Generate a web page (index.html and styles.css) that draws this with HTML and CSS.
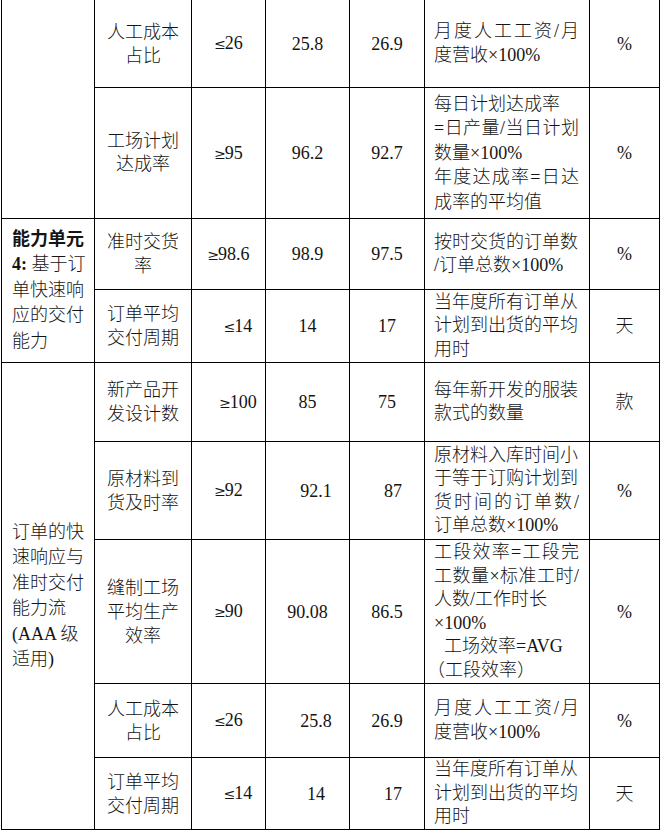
FILE: index.html
```html
<!DOCTYPE html>
<html lang="zh-CN">
<head>
<meta charset="utf-8">
<title>指标表</title>
<link rel="stylesheet" href="styles.css">
</head>
<body>
<table class="kpi">
  <colgroup>
    <col class="w1"><col class="w2"><col class="w3"><col class="w4"><col class="w5"><col class="w6"><col class="w7">
  </colgroup>
  <tr class="h1">
    <td class="cat" rowspan="2"></td>
    <td class="name">人工成本<br>占比</td>
    <td class="num"><span class="cmp">≤</span>26</td>
    <td class="num">25.8</td>
    <td class="num">26.9</td>
    <td class="desc"><span class="ln j">月度人工工资/月</span><span class="ln">度营收×100%</span></td>
    <td class="unit">%</td>
  </tr>
  <tr class="h2">
    <td class="name tight">工场计划<br>达成率</td>
    <td class="num"><span class="cmp">≥</span>95</td>
    <td class="num">96.2</td>
    <td class="num">92.7</td>
    <td class="desc loose"><span class="ln">每日计划达成率</span><span class="ln j">=日产量/当日计划</span><span class="ln">数量×100%</span><span class="ln j">年度达成率=日达</span><span class="ln">成率的平均值</span></td>
    <td class="unit">%</td>
  </tr>
  <tr class="h3">
    <td class="cat" rowspan="2"><b>能力单元<br>4:</b> 基于订<br>单快速响<br>应的交付<br>能力</td>
    <td class="name">准时交货<br>率</td>
    <td class="num"><span class="cmp">≥</span>98.6</td>
    <td class="num">98.9</td>
    <td class="num">97.5</td>
    <td class="desc"><span class="ln">按时交货的订单数</span><span class="ln">/订单总数×100%</span></td>
    <td class="unit">%</td>
  </tr>
  <tr class="h4">
    <td class="name">订单平均<br>交付周期</td>
    <td class="num shift3"><span class="cmp">≤</span>14</td>
    <td class="num">14</td>
    <td class="num">17</td>
    <td class="desc"><span class="ln">当年度所有订单从</span><span class="ln">计划到出货的平均</span><span class="ln">用时</span></td>
    <td class="unit">天</td>
  </tr>
  <tr class="h5">
    <td class="cat" rowspan="5">订单的快<br>速响应与<br>准时交付<br>能力流<br>(AAA 级<br>适用)</td>
    <td class="name">新产品开<br>发设计数</td>
    <td class="num shift3"><span class="cmp">≥</span>100</td>
    <td class="num">85</td>
    <td class="num">75</td>
    <td class="desc"><span class="ln">每年新开发的服装</span><span class="ln">款式的数量</span></td>
    <td class="unit">款</td>
  </tr>
  <tr class="h6">
    <td class="name">原材料到<br>货及时率</td>
    <td class="num"><span class="cmp">≥</span>92</td>
    <td class="num shift4">92.1</td>
    <td class="num shift5">87</td>
    <td class="desc"><span class="ln">原材料入库时间小</span><span class="ln">于等于订购计划到</span><span class="ln j">货时间的订单数/</span><span class="ln">订单总数×100%</span></td>
    <td class="unit">%</td>
  </tr>
  <tr class="h7">
    <td class="name">缝制工场<br>平均生产<br>效率</td>
    <td class="num"><span class="cmp">≥</span>90</td>
    <td class="num">90.08</td>
    <td class="num">86.5</td>
    <td class="desc"><span class="ln j">工段效率=工段完</span><span class="ln j">工数量×标准工时/</span><span class="ln">人数/工作时长</span><span class="ln">×100%</span><span class="ln indent">工场效率=AVG</span><span class="ln outdent">（工段效率）</span></td>
    <td class="unit">%</td>
  </tr>
  <tr class="h8">
    <td class="name">人工成本<br>占比</td>
    <td class="num"><span class="cmp">≤</span>26</td>
    <td class="num shift4">25.8</td>
    <td class="num">26.9</td>
    <td class="desc"><span class="ln j">月度人工工资/月</span><span class="ln">度营收×100%</span></td>
    <td class="unit">%</td>
  </tr>
  <tr class="h9">
    <td class="name">订单平均<br>交付周期</td>
    <td class="num shift3"><span class="cmp">≤</span>14</td>
    <td class="num shift4">14</td>
    <td class="num shift5">17</td>
    <td class="desc"><span class="ln">当年度所有订单从</span><span class="ln">计划到出货的平均</span><span class="ln">用时</span></td>
    <td class="unit">天</td>
  </tr>
</table>
</body>
</html>
```

FILE: styles.css
```css
html, body {
  margin: 0;
  padding: 0;
  background: #ffffff;
}

.kpi {
  border-collapse: collapse;
  table-layout: fixed;
  width: 659px;
  margin: -1px 0 0 1px;
  font-family: "Liberation Serif", "Noto Sans CJK SC", serif;
  font-size: 18px;
  font-weight: 300;
  color: #141414;
}

.kpi td {
  border: 1px solid #000;
  padding: 0;
  vertical-align: middle;
  line-height: 24px;
}

.w1 { width: 93px; }
.w2 { width: 97px; }
.w3 { width: 74px; }
.w4 { width: 84px; }
.w5 { width: 75px; }
.w6 { width: 165px; }
.w7 { width: 70px; }

.h1 { height: 88px; }
.h2 { height: 131px; }
.h3 { height: 71px; }
.h4 { height: 73px; }
.h5 { height: 79px; }
.h6 { height: 98px; }
.h7 { height: 144px; }
.h8 { height: 74px; }
.h9 { height: 72px; }

.cat {
  text-align: left;
  padding-left: 10px !important;
  line-height: 25.5px !important;
}

.cat b {
  font-weight: 700;
}

.name {
  text-align: center;
}

.name.tight {
  line-height: 23px !important;
}

.num {
  text-align: center;
}

.cmp {
  font-family: "DejaVu Serif", serif;
  font-size: 14px;
  font-weight: 400;
  margin-right: -1px;
}

.shift3 { padding-left: 19px !important; }
.shift4 { padding-left: 17px !important; }
.shift5 { padding-left: 12px !important; }

.desc {
  padding: 0 10px 0 9px !important;
  text-align: left;
  line-height: 23.5px !important;
}

.desc.loose {
  line-height: 24.5px !important;
}

.ln {
  display: block;
  white-space: nowrap;
}

.ln.j {
  text-align: justify;
  text-align-last: justify;
  white-space: normal;
}

.ln.indent {
  padding-left: 10px;
}

.ln.outdent {
  margin-left: -7px;
}

.unit {
  text-align: center;
}
```
